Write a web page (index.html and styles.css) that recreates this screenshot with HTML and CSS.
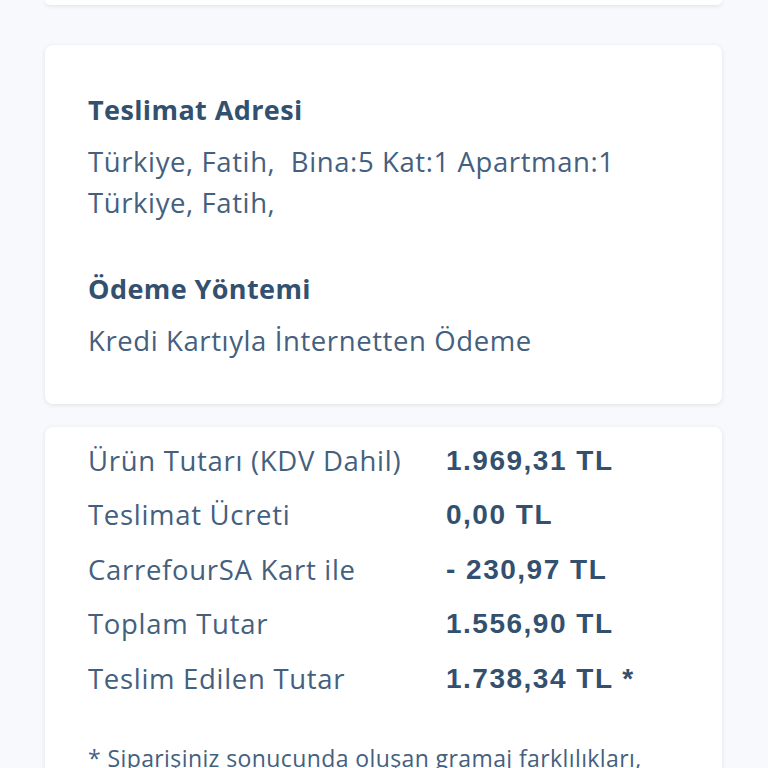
FILE: index.html
```html
<!DOCTYPE html>
<html lang="tr">
<head>
    <meta charset="UTF-8">
    <meta name="viewport" content="width=device-width, initial-scale=1.0">
    <title>Sipariş Detayı</title>
    <link rel="stylesheet" href="styles.css">
</head>
<body>
    <div class="page">
        <div class="card card-prev"></div>

        <div class="card info-card">
            <h2>Teslimat Adresi</h2>
            <p>Türkiye, Fatih,&nbsp; Bina:5 Kat:1 Apartman:1<br>Türkiye, Fatih,</p>

            <h2 class="section-gap">Ödeme Yöntemi</h2>
            <p>Kredi Kartıyla İnternetten Ödeme</p>
        </div>

        <div class="card summary-card">
            <div class="summary">
                <span class="label">Ürün Tutarı (KDV Dahil)</span>
                <span class="value">1.969,31 TL</span>

                <span class="label">Teslimat Ücreti</span>
                <span class="value">0,00 TL</span>

                <span class="label">CarrefourSA Kart ile</span>
                <span class="value">- 230,97 TL</span>

                <span class="label">Toplam Tutar</span>
                <span class="value">1.556,90 TL</span>

                <span class="label">Teslim Edilen Tutar</span>
                <span class="value">1.738,34 TL *</span>
            </div>
            <p class="note">* Siparişiniz sonucunda oluşan gramaj farklılıkları,<br>teslimat sırasında kartınıza yansıtılır.</p>
        </div>
    </div>
</body>
</html>
```

FILE: styles.css
```css
:root {
    --background: #f7f9fc;
    --surface: #ffffff;
    --heading: #33506f;
    --text: #44607e;
}

body {
    margin: 0;
    background: var(--background);
    color: var(--text);
    font-family: "Open Sans", Lato, sans-serif;
}

.page {
    padding: 0 46px 0 45px;
}

.card {
    background: var(--surface);
    border-radius: 8px;
    box-shadow: 0 1px 4px rgb(40 60 90 / 0.12);
}

.card-prev {
    height: 5px;
    border-radius: 0 0 8px 8px;
    margin-bottom: 40px;
}

.info-card {
    padding: 45px 43px 43px;
    margin-bottom: 23px;
}

.info-card h2 {
    margin: 0 0 11px;
    font-size: 27px;
    font-weight: 700;
    line-height: 40px;
    letter-spacing: 0.4px;
    color: var(--heading);
}

.info-card h2.section-gap {
    margin-top: 46px;
}

.info-card p {
    margin: 0;
    font-size: 27.5px;
    line-height: 41px;
    letter-spacing: 0.6px;
}

.summary-card {
    padding: 14px 43px 40px;
}

.summary {
    display: grid;
    grid-template-columns: 358px 1fr;
    row-gap: 14px;
    font-size: 27.5px;
    line-height: 40.4px;
    letter-spacing: 0.7px;
}

.value {
    font-family: "Liberation Sans", Arial, sans-serif;
    font-size: 28px;
    font-weight: 700;
    letter-spacing: 1.5px;
    color: var(--heading);
}

.note {
    margin: 42px 0 0;
    font-size: 23px;
    line-height: 34px;
    letter-spacing: 0.4px;
}
```
